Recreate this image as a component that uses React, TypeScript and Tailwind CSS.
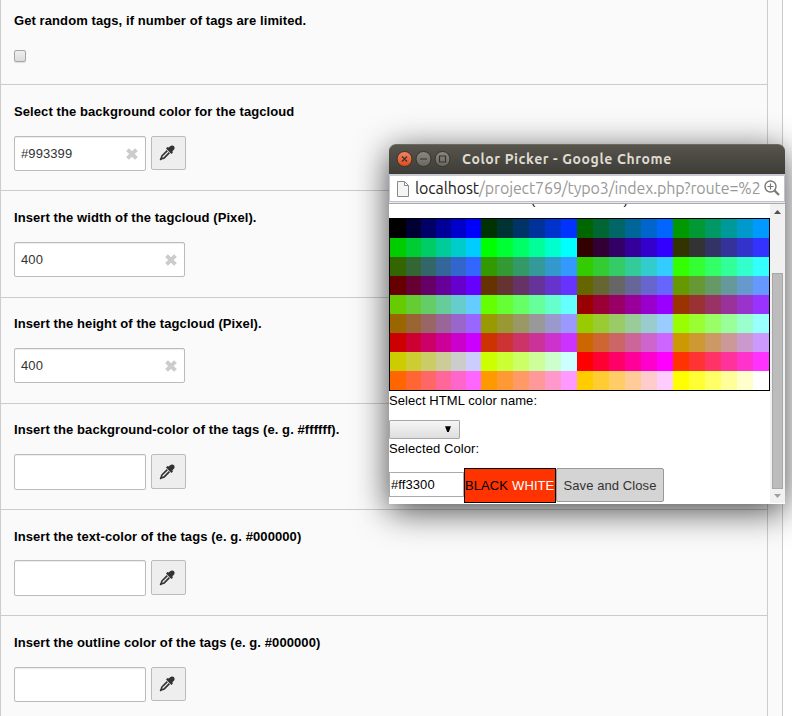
import { Fragment } from "react";

const LEVELS = ["00", "33", "66", "99", "cc", "ff"];

type Field = { label: string; value: string; wide?: boolean; tall?: boolean; box: string; gap: string };

const FIELDS: Field[] = [
  { label: "Select the background color for the tagcloud", value: "#993399", box: "h-[106px] pt-[18px]", gap: "mt-[15px]" },
  { label: "Insert the width of the tagcloud (Pixel).", value: "400", wide: true, box: "h-[107px] pt-[18px]", gap: "mt-[15px]" },
  { label: "Insert the height of the tagcloud (Pixel).", value: "400", wide: true, box: "h-[106px] pt-[17px]", gap: "mt-[15px]" },
  { label: "Insert the background-color of the tags (e. g. #ffffff).", value: "", tall: true, box: "h-[106px] pt-[17px]", gap: "mt-[15px]" },
  { label: "Insert the text-color of the tags (e. g. #000000)", value: "", tall: true, box: "h-[106px] pt-[18px]", gap: "mt-[14px]" },
  { label: "Insert the outline color of the tags (e. g. #000000)", value: "", box: "h-[106px] pt-[18px]", gap: "mt-[15px]" },
];

function Dropper() {
  return (
    <svg width="16" height="16" viewBox="0 0 16 16">
      <path
        d="M8.3 5.6 L3.4 10.5 Q2.7 11.2 2.5 12.2 L2.1 13.9 L3.8 13.5 Q4.8 13.3 5.5 12.6 L10.4 7.7"
        fill="none"
        stroke="#333"
        strokeWidth="1.7"
      />
      <path d="M.6 14.4 L2.2 12.6 L3.4 13.8 L1.6 15.4 Z" fill="#333" />
      <path
        d="M9.7 2.6 C10.8 1.3 11.8 .3 13.1 .4 C14.8 .5 15.7 1.7 15.6 3.1 C15.5 4.4 14.6 5.2 13.4 6.3 L13.9 7.5 L12.4 9 L7 3.6 L8.5 2.1 Z"
        fill="#333"
      />
    </svg>
  );
}

function FieldRow({ field }: { field: Field }) {
  return (
    <div className={"shrink-0 border-t border-[#ccc] pl-[13px] " + field.box}>
      <div className="h-[18px] text-[13px] font-bold leading-[18px] tracking-[0.085px] text-black whitespace-nowrap">
        {field.label}
      </div>
      <div className={"flex items-start gap-[5px] " + field.gap}>
        <div
          className={
            "flex items-center justify-between rounded-[2px] border border-[#bbb] bg-white pl-[6px] pr-[7px] text-[13px] tracking-[0.085px] text-[#333] shadow-[inset_0_1px_1px_rgba(0,0,0,0.075)] " +
            (field.wide ? "w-[171px] " : "w-[132px] ") +
            (field.tall ? "h-[36px]" : "h-[35px]")
          }
        >
          <span>{field.value}</span>
          {field.value && (
            <svg width="12" height="12" viewBox="0 0 12 12">
              <path d="M2.9 2.9 L9.1 9.1 M9.1 2.9 L2.9 9.1" stroke="#ccc" strokeWidth="3.9" strokeLinecap="square" />
            </svg>
          )}
        </div>
        {!field.wide && (
          <div
            className={
              "flex w-[35px] items-start rounded-[2px] border border-[#bbb] bg-[#eee] pl-[7px] " +
              (field.tall ? "h-[35px] pt-[9px]" : "h-[34px] pt-[8px]")
            }
          >
            <Dropper />
          </div>
        )}
      </div>
    </div>
  );
}

function Palette() {
  return (
    <div className="flex h-[173px] w-[381px] flex-col border border-black">
      {Array.from({ length: 9 }, (_, row) => (
        <div key={row} className="flex h-[19px]">
          {Array.from({ length: 4 }, (_, group) => {
            const n = row * 4 + group;
            return (
              <Fragment key={group}>
                {LEVELS.map((blue, i) => (
                  <div
                    key={blue}
                    className={group === 0 && i > 0 ? "h-full w-[15px]" : "h-full w-[16px]"}
                    style={{ backgroundColor: "#" + LEVELS[Math.floor(n / 6)] + LEVELS[n % 6] + blue }}
                  />
                ))}
              </Fragment>
            );
          })}
        </div>
      ))}
    </div>
  );
}

function TitleBar() {
  return (
    <div className="flex h-[30px] items-center rounded-t-[7px] border-t border-[#6a685f] bg-linear-to-b from-[#57554c] to-[#3d3c37] pl-[7px]">
      <svg width="56" height="18" viewBox="0 0 56 18" className="mb-[2px] shrink-0">
        <defs>
          <linearGradient id="close" x2="0" y2="1">
            <stop stopColor="#f58560" />
            <stop offset="1" stopColor="#dd4a1e" />
          </linearGradient>
          <linearGradient id="grey" x2="0" y2="1">
            <stop stopColor="#8b897f" />
            <stop offset="1" stopColor="#68665e" />
          </linearGradient>
        </defs>
        <circle cx="8.5" cy="9" r="7.5" fill="url(#close)" stroke="#34332e" />
        <circle cx="27.5" cy="9" r="7.5" fill="url(#grey)" stroke="#34332e" />
        <circle cx="46.5" cy="9" r="7.5" fill="url(#grey)" stroke="#34332e" />
        <path d="M6 6.5 L11 11.5 M11 6.5 L6 11.5 M24 9 H31 M43.5 6 H49.5 V12 H43.5 Z" fill="none" stroke="#34332e" strokeWidth="1.2" />
      </svg>
      <span className="ml-[10px] whitespace-nowrap font-['Ubuntu','Noto_Sans',sans-serif] text-[14px] font-bold tracking-[0.61px] text-[#dfdbd2]">
        Color Picker - Google Chrome
      </span>
    </div>
  );
}

function AddressBar() {
  return (
    <div className="flex h-[30px] flex-col border-b border-t-2 border-b-[#aaa] border-t-[#c9c9d2] bg-[#e8e8ec]">
      <div className="flex h-[26px] items-center border-x border-b border-[#bfc2d4] bg-white pl-[7px]">
        <svg width="12" height="16" viewBox="0 0 12 16" className="shrink-0">
          <path d="M.5 .5 H7.5 L11.5 4.5 V15.5 H.5 Z M7.5 .5 V4.5 H11.5" fill="#f5f5f5" stroke="#888" />
        </svg>
        <span className="mb-[2px] ml-[6px] w-[349px] whitespace-nowrap font-['Ubuntu','Noto_Sans',sans-serif] text-[16px] leading-[22px] tracking-[-0.12px] text-[#999]">
          <span className="text-[#222]">localhost</span>/project769/typo3/index.php?route=%2
        </span>
        <svg width="16" height="16" viewBox="0 0 16 16" fill="none" stroke="#777" className="mb-[2px] shrink-0">
          <circle cx="6.5" cy="6.5" r="5.5" strokeWidth="1.4" />
          <path d="M10.5 10.5 L15 15" strokeWidth="2.2" />
          <path d="M3.5 6.5 H9.5 M6.5 3.5 V9.5" strokeWidth="1.2" />
        </svg>
      </div>
    </div>
  );
}

function PopupContent() {
  return (
    <div className="flex h-[300px] bg-white">
      <div className="w-[381px] shrink-0 text-[13px] tracking-[0.085px] text-black">
        <div className="h-[14px] overflow-hidden">
          <div className="-mt-[11px] flex h-[14px] whitespace-nowrap leading-[14px]">
            <span className="ml-[142px]">(</span>
            <span className="ml-[88px]">)</span>
          </div>
        </div>
        <Palette />
        <div className="h-[18px] leading-[19px]">Select HTML color name:</div>
        <div className="mt-[11px] flex h-[19px] w-[71px] items-center justify-end rounded-[1px] border border-[#a6a6a6] bg-linear-to-b from-[#f6f6f6] to-[#dedede] pr-[8px]">
          <svg width="6" height="6" viewBox="0 0 6 6" className="mb-px">
            <path d="M0 .2 H6 L3.8 6 H2.2 Z" fill="#000" />
          </svg>
        </div>
        <div className="h-[18px] leading-[19px]">Selected Color:</div>
        <div className="mt-[11px] flex h-[35px]">
          <div className="mt-[4px] flex h-[25px] w-[75px] items-center border border-[#aaa] bg-white pl-[1px]">#ff3300</div>
          <div className="flex h-[35px] w-[92px] items-center gap-[4px] border border-black bg-[#ff3300] whitespace-nowrap">
            <span>BLACK</span>
            <span className="text-white">WHITE</span>
          </div>
          <div className="flex h-[34px] w-[108px] items-center justify-center rounded-[2px] border border-[#999] bg-[#d4d4d4] pt-px whitespace-nowrap text-[#333]">
            Save and Close
          </div>
        </div>
      </div>
      <div className="flex h-[299px] w-[15px] flex-col items-center bg-[#f1f1f1]">
        <svg width="7" height="4" viewBox="0 0 7 4" className="mt-[6px]">
          <path d="M3.5 0 L7 4 H0 Z" fill="#505050" />
        </svg>
        <div className="mt-[59px] h-[216px] w-[11px] border border-[#a8a8a8] bg-[#bcbcbc]" />
        <svg width="7" height="4" viewBox="0 0 7 4" className="mt-[5px]">
          <path d="M0 0 H7 L3.5 4 Z" fill="#a0a0a0" />
        </svg>
      </div>
    </div>
  );
}

export default function App() {
  return (
    <div className="relative h-[716px] w-[792px] overflow-hidden bg-white font-['Liberation_Sans',Arial,sans-serif]">
      <div className="flex h-full w-[783px] border-r border-[#ccc] bg-[#fafafa]">
        <div className="flex h-full w-[768px] flex-col overflow-hidden border-x border-[#ccc]">
          <div className="h-[84px] shrink-0 pl-[13px] pt-[12px]">
            <div className="h-[18px] text-[13px] font-bold leading-[18px] tracking-[0.085px]">
              Get random tags, if number of tags are limited.
            </div>
            <div className="mt-[20px] h-[12px] w-[12px] rounded-[2px] border border-[#a5a5a5] bg-linear-to-b from-[#eee] to-[#dcdcdc] shadow-[0_1px_1px_rgba(0,0,0,0.1)]" />
          </div>
          {FIELDS.map((field) => (
            <FieldRow key={field.label} field={field} />
          ))}
        </div>
      </div>
      <div className="absolute left-[389px] top-[144px] w-[396px] rounded-t-[7px] shadow-[0_7px_34px_0_rgba(0,0,0,0.72)]">
        <TitleBar />
        <AddressBar />
        <PopupContent />
      </div>
    </div>
  );
}
